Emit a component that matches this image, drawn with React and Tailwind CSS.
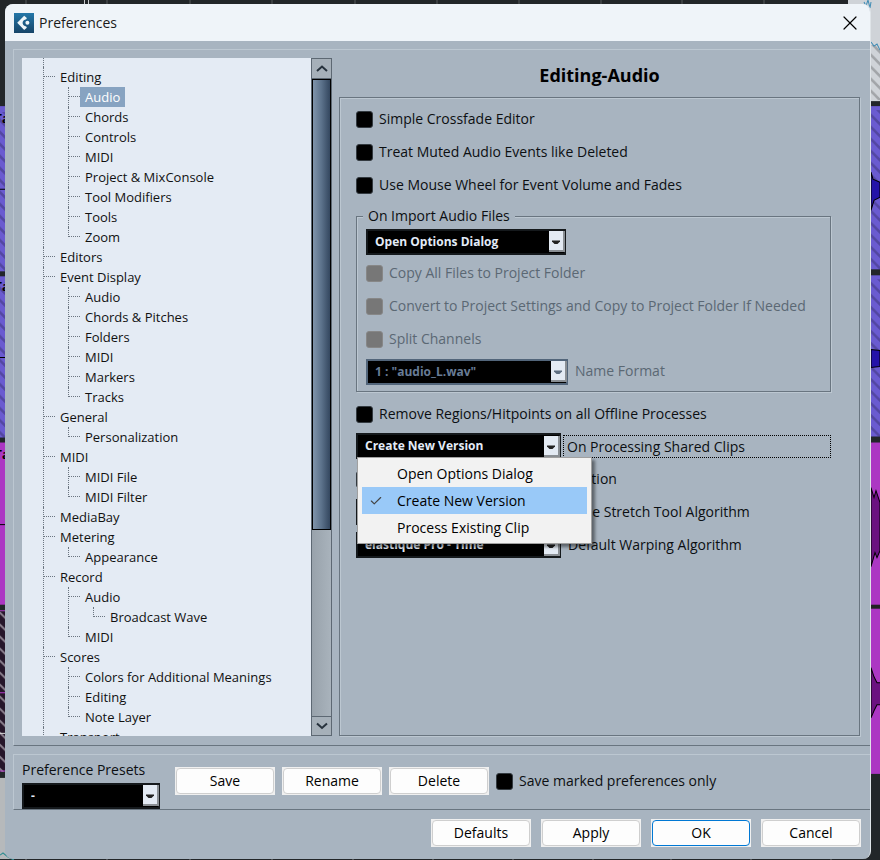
import { Check, X } from 'lucide-react'

const tree = [
  {
    label: 'Editing',
    items: [
      { label: 'Audio', active: true },
      { label: 'Chords' },
      { label: 'Controls' },
      { label: 'MIDI' },
      { label: 'Project & MixConsole' },
      { label: 'Tool Modifiers' },
      { label: 'Tools' },
      { label: 'Zoom' },
    ],
  },
  { label: 'Editors' },
  {
    label: 'Event Display',
    items: [
      { label: 'Audio' },
      { label: 'Chords & Pitches' },
      { label: 'Folders' },
      { label: 'MIDI' },
      { label: 'Markers' },
      { label: 'Tracks' },
    ],
  },
  { label: 'General', items: [{ label: 'Personalization' }] },
  { label: 'MIDI', items: [{ label: 'MIDI File' }, { label: 'MIDI Filter' }] },
  { label: 'MediaBay' },
  { label: 'Metering', items: [{ label: 'Appearance' }] },
  {
    label: 'Record',
    items: [{ label: 'Audio', items: [{ label: 'Broadcast Wave' }] }, { label: 'MIDI' }],
  },
  {
    label: 'Scores',
    items: [{ label: 'Colors for Additional Meanings' }, { label: 'Editing' }, { label: 'Note Layer' }],
  },
  { label: 'Transport' },
]

const menuItems = ['Open Options Dialog', 'Create New Version', 'Process Existing Clip']

// One row of the tree; the dotted guides are drawn by the two spans
function TreeNode({ node, last }) {
  return (
    <li className="relative pl-3">
      <span
        className={`absolute top-0 left-0 border-l border-dotted border-[#6b7580] ${last ? 'h-[10px]' : 'h-full'}`}
      />
      <span className="absolute top-[9px] left-0 w-3 border-t border-dotted border-[#6b7580]" />
      <button
        className={`block h-5 whitespace-nowrap px-[5px] text-[13px] leading-5 ${
          node.active ? 'bg-[#87a3c1] text-white' : 'text-[#111]'
        }`}
      >
        {node.label}
      </button>
      {node.items && (
        <ul className="pl-[13px]">
          {node.items.map((child, i) => (
            <TreeNode key={child.label} node={child} last={i === node.items.length - 1} />
          ))}
        </ul>
      )}
    </li>
  )
}

function Scrollbar() {
  return (
    <div className="flex w-[21px] shrink-0 flex-col border-x border-[#5d6873] bg-[#a6b0b9]">
      <button aria-label="Scroll up" className="flex h-[21px] items-center justify-center border-y border-[#5d6873]">
        <Chevron up />
      </button>
      <div className="h-[451px] border border-black bg-gradient-to-r from-[#8094aa] via-[#5c728b] to-[#34475f]" />
      <div className="grow bg-gradient-to-r from-[#98a2ab] to-[#a9b3bc]" />
      <button aria-label="Scroll down" className="flex h-5 items-center justify-center border-y border-[#5d6873]">
        <Chevron />
      </button>
    </div>
  )
}

function Chevron({ up }) {
  return (
    <svg width="14" height="10" viewBox="0 0 14 10" fill="none" stroke="#27323d" strokeWidth="2">
      <path d={up ? 'M2 7L7 2.500L12 7' : 'M2 2.500L7 7L12 2.500'} />
    </svg>
  )
}

function CheckRow({ label, disabled }) {
  return (
    <label className={`flex h-[22px] items-center gap-[6px] text-sm ${disabled ? 'text-[#5b6874]' : 'text-[#0c0f12]'}`}>
      <input
        type="checkbox"
        disabled={disabled}
        className={`size-[17px] shrink-0 appearance-none rounded-[3px] border ${
          disabled ? 'border-[#878787] bg-[#777]' : 'border-[#333a40] bg-black'
        }`}
      />
      <span className="whitespace-nowrap">{label}</span>
    </label>
  )
}

function Dropdown({ id, value, width, disabled, label }) {
  return (
    <div className={`relative h-[26px] shrink-0 ${width}`}>
      <select
        id={id}
        aria-label={label}
        disabled={disabled}
        defaultValue={value}
        className={`size-full appearance-none border-2 bg-black pl-[7px] text-[12px] font-bold opacity-100 ${
          disabled ? 'border-[#52657a] text-[#687c96]' : 'border-[#15191c] text-[#e3ebf7]'
        }`}
      >
        <option>{value}</option>
      </select>
      <span className="pointer-events-none absolute top-[3px] right-px flex h-[21px] w-4 items-center justify-center border-r-2 border-b-2 border-[#8a8f94] bg-[#e3eaf3] pt-1">
        <svg width="8" height="5" viewBox="0 0 8 5">
          <path d="M0 0.5H8V1.5L5.500 4H2.500L0 1.5Z" fill={disabled ? '#5d6d80' : '#222'} />
        </svg>
      </span>
    </div>
  )
}

function PushButton({ children, primary }) {
  return (
    <button className="h-7 w-[100px] shrink-0 bg-[#f0f0f0] p-px text-sm text-black">
      <span
        className={`flex size-full items-center justify-center rounded border bg-[#fdfdfd] ${
          primary ? 'border-[#0078d4]' : 'border-[#cfcfcf]'
        }`}
      >
        {children}
      </span>
    </button>
  )
}

function Logo() {
  return (
    <svg width="20" height="20" viewBox="0 0 20 20">
      <defs>
        <linearGradient id="logo-bg" x1="0" y1="0" x2="0" y2="1">
          <stop offset="0" stopColor="#2376a8" />
          <stop offset="1" stopColor="#174468" />
        </linearGradient>
      </defs>
      <rect width="20" height="20" fill="url(#logo-bg)" />
      <path
        d="M10.200 2.800L3.200 9.800L10.200 17L12.800 14.800Q12.800 13.600 11.600 13.200Q8.600 12.400 8.600 9.800Q8.600 7.400 11.600 6.500Q12.800 6.100 12.800 5Z"
        fill="#eef6fa"
      />
      <circle cx="13.400" cy="9.800" r="2" fill="#eef6fa" />
    </svg>
  )
}

// The project window that shows around the dialog's edges
function ProjectBackdrop() {
  return (
    <svg className="absolute inset-0 size-full" viewBox="0 0 880 860" preserveAspectRatio="none">
      <defs>
        <pattern id="hatch" width="12" height="12" patternUnits="userSpaceOnUse">
          <path d="M-3 -3L15 15M-3 9L3 15M9 -3L15 3" stroke="#000" strokeOpacity="0.22" strokeWidth="2.5" />
        </pattern>
        <pattern id="hatch-light" width="12" height="12" patternUnits="userSpaceOnUse">
          <path d="M-3 -3L15 15M-3 9L3 15M9 -3L15 3" stroke="#8a7f8d" strokeWidth="2" />
        </pattern>
      </defs>
      <rect width="880" height="860" fill="#222629" />
      <path
        d="M26 0V5M107 0V5M190 0V5M272 0V5M355 0V5M437 0V5M519 0V5M601 0V5M682 0V5M764 0V5"
        stroke="#55585b"
      />
      <path d="M84.500 0V5M88.500 0V5" stroke="#c8cacc" />
      <path
        d="M26 858V860M107 858V860M190 858V860M272 858V860M353 858V860M433 858V860M513 858V860M593 858V860M671 858V860M751 858V860M831 858V860"
        stroke="#77797c"
      />

      <rect y="106" width="20" height="165" fill="#6a5bd0" />
      <rect y="112" width="20" height="159" fill="url(#hatch)" />
      <rect y="276" width="20" height="161" fill="#6a5bd0" />
      <rect y="282" width="20" height="155" fill="url(#hatch)" />
      <path d="M0 189H10M0 357H10" stroke="#000" />
      <rect y="442" width="20" height="162" fill="#ac37c3" />
      <path d="M0 524H10" stroke="#000" />
      <rect y="611" width="20" height="160" fill="#26162a" />
      <rect y="611" width="20" height="160" fill="url(#hatch-light)" />
      <path d="M0 692H10M0 610H10M0 770H10" stroke="#b13bc8" />
      <path d="M0 732.500H10" stroke="#ddd" />
      <rect y="777" width="20" height="81" fill="#b6b9bb" />
      <path d="M0 854L3 852L8 856L14 859" stroke="#2f8d92" fill="none" />
      <text x="-5" y="123" fontSize="12" fontWeight="700">Ta</text>
      <text x="-5" y="291" fontSize="12" fontWeight="700">Ta</text>
      <text x="-5" y="458" fontSize="12" fontWeight="700">Ta</text>

      <rect x="848" width="32" height="101" fill="#cfd3d8" />
      <rect x="848" y="45" width="32" height="55" fill="url(#hatch)" />
      <path d="M864 2L866 6L868 0L870 8L871 2M871 42L874 46L877 44L880 50" stroke="#3c8bb5" fill="none" />
      <rect x="860" y="106" width="20" height="163" fill="#6a5bd0" />
      <rect x="860" y="110" width="20" height="159" fill="url(#hatch)" />
      <rect x="860" y="275" width="20" height="161" fill="#6a5bd0" />
      <rect x="860" y="279" width="20" height="157" fill="url(#hatch)" />
      <path d="M871 172L873 179L880 182V197L874 200L871 210Z" fill="#2413a8" stroke="#000" />
      <path d="M871 349L880 350V366L871 367Z" fill="#2413a8" stroke="#000" />
      <rect x="860" y="442" width="20" height="331" fill="#ac37c3" />
      <path d="M871 487L874 497L876 490L880 502V550L877 557L875 552L871 566Z" fill="#6b1180" stroke="#000" />
      <path d="M871 606H880" stroke="#222" strokeWidth="4" />
      <path d="M871 667L874 676L877 682H881V704H877L874 710L871 717Z" fill="#6b1180" stroke="#000" />
    </svg>
  )
}

export default function App() {
  return (
    <div className="relative flex min-h-screen pt-1 pr-[9px] pb-[2px] pl-[5px] font-['Open_Sans',sans-serif]">
      <ProjectBackdrop />
      <main className="relative flex grow flex-col overflow-hidden rounded-lg border-r border-[#dfe4e8] bg-[#a8b4c0]">
        <header className="flex h-[37px] shrink-0 items-center bg-[#eff4f9] pr-2 pl-[9px]">
          <Logo />
          <h1 className="grow pl-[5px] text-sm text-[#1a1a1a]">Preferences</h1>
          <button aria-label="Close">
            <X size={24} strokeWidth={1.2} />
          </button>
        </header>

        <div className="mt-2 ml-2 flex grow gap-[7px] border-t border-b border-l border-t-[#bcc7d1] border-b-[#697580] border-l-[#bcc7d1] pt-2 pr-[10px] pb-[9px] pl-2">
          <div className="flex h-[678px] w-[310px] shrink-0">
            <nav className="grow overflow-hidden bg-[#e4ebf4] pl-[21px]">
              <ul>
                <li className="h-[9px] border-l border-dotted border-[#6b7580]" />
                {tree.map((node) => (
                  <TreeNode key={node.label} node={node} />
                ))}
              </ul>
            </nav>
            <Scrollbar />
          </div>

          <section className="flex grow flex-col">
            <h2 className="h-[39px] pt-[5px] text-center text-lg leading-6 font-bold text-black">Editing-Audio</h2>
            <div className="grow border border-[#697580] pt-[10px] pl-4 shadow-[inset_1px_1px_0_#bcc7d1,1px_1px_0_#bcc7d1]">
              <div className="flex flex-col gap-[11px]">
                <CheckRow label="Simple Crossfade Editor" />
                <CheckRow label="Treat Muted Audio Events like Deleted" />
                <CheckRow label="Use Mouse Wheel for Event Volume and Fades" />
              </div>
              <fieldset className="mt-2 mr-7 border border-[#697580] px-[9px] pb-[7px] shadow-[inset_1px_1px_0_#bcc7d1,1px_1px_0_#bcc7d1]">
                <legend className="ml-[-3px] bg-[#a8b4c0] px-[5px] text-sm leading-6 text-[#0c0f12]">
                  On Import Audio Files
                </legend>
                <Dropdown value="Open Options Dialog" width="w-[200px]" label="On Import Audio Files" />
                <div className="mt-2 flex flex-col gap-[11px]">
                  <CheckRow label="Copy All Files to Project Folder" disabled />
                  <CheckRow label="Convert to Project Settings and Copy to Project Folder If Needed" disabled />
                  <CheckRow label="Split Channels" disabled />
                </div>
                <div className="mt-2 flex items-center gap-[7px]">
                  <Dropdown id="name-format" value={'1 : "audio_L.wav"'} width="w-[202px]" disabled />
                  <label htmlFor="name-format" className="text-sm text-[#5b6874]">
                    Name Format
                  </label>
                </div>
              </fieldset>
              <div className="mt-[11px]">
                <CheckRow label="Remove Regions/Hitpoints on all Offline Processes" />
              </div>
              <div className="relative mt-2 mr-7 flex flex-col gap-[7px] text-sm text-[#0c0f12]">
                <div className="flex items-center gap-[2px]">
                  <Dropdown id="shared-clips" value="Create New Version" width="w-[205px]" />
                  <label htmlFor="shared-clips" className="grow border border-dotted border-black px-[3px] leading-[21px]">
                    On Processing Shared Clips
                  </label>
                </div>
                <div className="flex h-[26px] items-center">
                  <CheckRow label="Enable Automatic Hitpoint Detection" />
                </div>
                <div className="flex items-center gap-[7px]">
                  <Dropdown id="stretch" value="élastique Pro - Time" width="w-[205px]" />
                  <label htmlFor="stretch">Time Stretch Tool Algorithm</label>
                </div>
                <div className="flex items-center gap-[7px]">
                  <Dropdown id="warping" value="élastique Pro - Time" width="w-[205px]" />
                  <label htmlFor="warping">Default Warping Algorithm</label>
                </div>

                <ul className="absolute top-6 left-px w-[235px] border border-[#a0a0a0] bg-[#f2f2f2] px-1 py-[2px] text-black shadow-[3px_3px_3px_rgba(0,0,0,0.45)]">
                  {menuItems.map((item) => (
                    <li key={item}>
                      <button
                        className={`flex h-[27px] w-full items-center pl-[7px] ${
                          item === 'Create New Version' ? 'bg-[#99c9f8]' : ''
                        }`}
                      >
                        <span className="w-7">
                          {item === 'Create New Version' && <Check size={14} strokeWidth={2} color="#444" />}
                        </span>
                        {item}
                      </button>
                    </li>
                  ))}
                </ul>
              </div>
            </div>
          </section>
        </div>

        <div className="mt-2 ml-2 flex h-14 shrink-0 border-t border-b border-l border-t-[#bcc7d1] border-b-[#697580] border-l-[#bcc7d1] pl-2">
          <div className="mr-[15px] pt-[5px]">
            <label htmlFor="presets" className="block text-sm leading-5 text-[#0c0f12]">
              Preference Presets
            </label>
            <div className="pt-[2px]">
              <Dropdown id="presets" value="-" width="w-[138px]" />
            </div>
          </div>
          <div className="mt-3 flex h-7 items-center gap-[7px]">
            <PushButton>Save</PushButton>
            <PushButton>Rename</PushButton>
            <PushButton>Delete</PushButton>
            <CheckRow label="Save marked preferences only" />
          </div>
        </div>
        <footer className="flex h-[49px] shrink-0 justify-end gap-[10px] pt-[9px] pr-[9px]">
          <PushButton>Defaults</PushButton>
          <PushButton>Apply</PushButton>
          <PushButton primary>OK</PushButton>
          <PushButton>Cancel</PushButton>
        </footer>
      </main>
    </div>
  )
}
